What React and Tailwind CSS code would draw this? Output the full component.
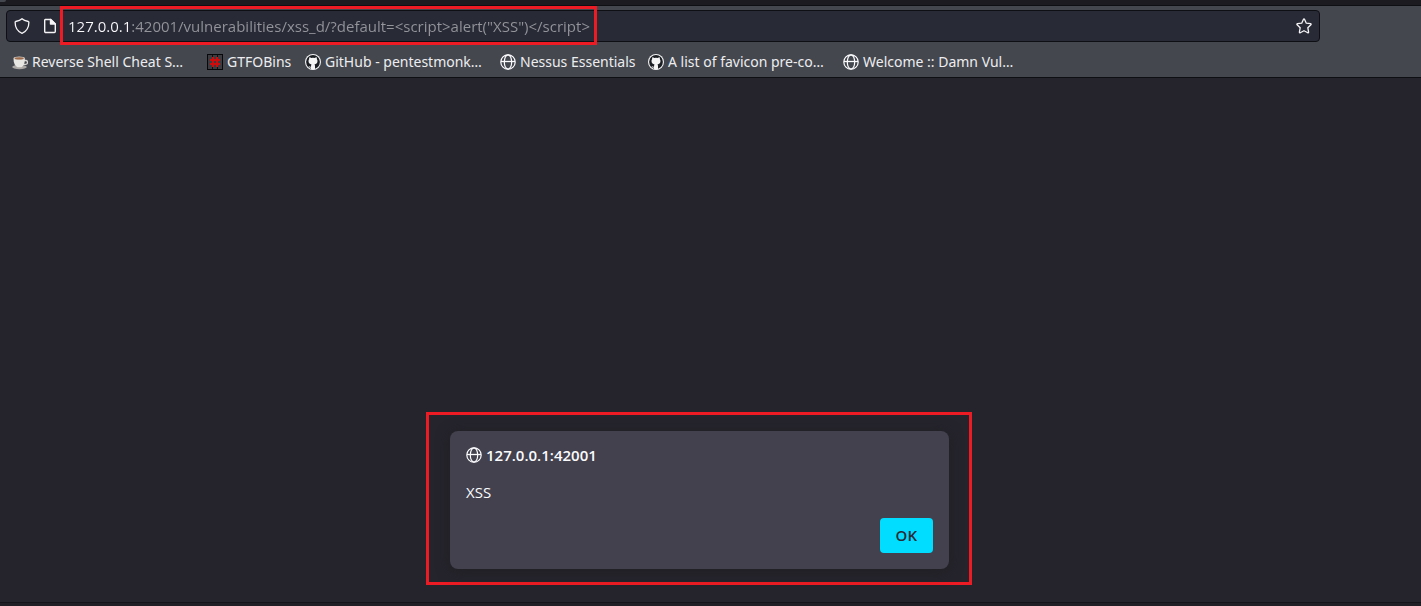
import React from "react";

function Globe() {
  return (
    <svg className="size-4 shrink-0" viewBox="0 0 16 16" fill="none" stroke="#fbfbfe" strokeWidth="1.2" aria-hidden="true">
      <circle cx="8" cy="8" r="7.2" />
      <ellipse cx="8" cy="8" rx="3.7" ry="7.2" />
      <path d="M1 7.5h14" strokeWidth="1.3" />
    </svg>
  );
}

function Cup() {
  return (
    <svg className="size-4 shrink-0" viewBox="0 0 16 16" aria-hidden="true">
      <ellipse cx="7.5" cy="13" rx="7.3" ry="2.2" fill="#aaa7a4" />
      <path d="M12 6.5h1.600a1.500 1.500 0 0 1 0 3.800H11" fill="none" stroke="#d8d6d3" strokeWidth="1.3" />
      <path d="M1.500 4.500h11.400c0 4.600-1.200 7.600-3.400 8.800h-4C3 12.100 1.500 9.100 1.500 4.500z" fill="#e8e6e3" />
      <ellipse cx="7.200" cy="4.300" rx="5.700" ry="1.700" fill="#d5d0cb" />
      <ellipse cx="7.200" cy="4.400" rx="4.500" ry="1.100" fill="#9b6b4b" />
    </svg>
  );
}

function Hash() {
  return (
    <svg className="size-4 shrink-0" viewBox="0 0 16 16" aria-hidden="true">
      <rect width="16" height="16" fill="#08080a" />
      <path d="M1 1h14v14H1z" fill="#3b3b40" />
      <path d="M5.500 1v14M10.500 1v14" stroke="#101013" strokeWidth="1" />
      <path d="M6 3v10M10 3v10M3 6h10M3 10h10" stroke="#cf0c0c" strokeWidth="2" />
    </svg>
  );
}

function Octocat() {
  return (
    <svg className="size-4 shrink-0" viewBox="0 0 16 16" aria-hidden="true">
      <circle cx="8" cy="8" r="8" fill="#f4f4f5" />
      <circle cx="8" cy="8" r="6.900" fill="#1b1f23" />
      <path
        d="M4.300 3.200c.8 0 1.500.4 2.100.8a7 7 0 0 1 3.200 0c.6-.4 1.300-.8 2.100-.8.3.8.2 1.400.1 1.800.5.600.7 1.300.7 2.100 0 2.500-1.500 3.100-3 3.300.4.400.5.900.5 1.500v3.300H6v-1.600c-1.500.3-2-.6-2.500-1.400.9-.2 1.400.9 2.500.6 0-1 .1-1.900.5-2.400-1.500-.2-3-.8-3-3.300 0-.8.2-1.500.7-2.100-.1-.4-.2-1 .1-1.800z"
        fill="#f4f4f5"
      />
    </svg>
  );
}

const bookmarks = [
  { label: "Reverse Shell Cheat S…", icon: Cup, width: "w-[183px]" },
  { label: "GTFOBins", icon: Hash, width: "w-[86px]" },
  { label: "GitHub - pentestmonk…", icon: Octocat, width: "w-[183px]" },
  { label: "Nessus Essentials", icon: Globe, width: "w-[136px]" },
  { label: "A list of favicon pre-co…", icon: Octocat, width: "w-[183px]" },
  { label: "Welcome :: Damn Vul…", icon: Globe, width: "w-[183px]" },
];

function AddressBar() {
  return (
    <div className="mr-[101px] ml-1.5 flex h-8 items-center rounded-sm border border-[#0e0f15] bg-[#282a36]">
      <button type="button" aria-label="Tracking protection" className="ml-[7px]">
        <svg className="size-4" viewBox="0 0 16 16" fill="none" stroke="#f4f4f6" strokeWidth="1.300" strokeLinejoin="round" aria-hidden="true">
          <path d="M8 .8c1.500 1.400 4 2.200 6.400 2.700.3.100.5.300.5.600 0 5.400-2.200 9.400-6.900 11.200C3.300 13.500 1.100 9.500 1.100 4.100c0-.3.200-.5.500-.6C4 3 6.500 2.200 8 .8z" />
        </svg>
      </button>
      <button type="button" aria-label="Site information" className="ml-3">
        <svg className="size-4" viewBox="0 0 16 16" fill="none" stroke="#f4f4f6" strokeWidth="1.400" strokeLinejoin="round" aria-hidden="true">
          <path d="M3.200 1.500h5.600l4.500 4.500v7.500a1 1 0 0 1-1 1H3.700a1 1 0 0 1-1-1V2a.5.5 0 0 1 .5-.5z" />
          <path d="M8.500 1.500V6h4.800z" fill="#f4f4f6" />
        </svg>
      </button>
      <div className="relative ml-2.5 w-[524px]">
        <input
          type="text"
          aria-label="Address"
          defaultValue={'127.0.0.1:42001/vulnerabilities/xss_d/?default=<script>alert("XSS")</script>'}
          className="block h-[30px] w-full bg-[linear-gradient(90deg,#fbfbfe_62px,#94959b_62px)] bg-clip-text text-[#94959b] outline-none [-webkit-text-fill-color:transparent]"
        />
        <div className="pointer-events-none absolute -top-[5px] -right-[5px] -bottom-1 -left-2 border-3 border-[#ed1c24]" />
      </div>
      <button type="button" aria-label="Bookmark this page" className="mr-[7px] ml-auto">
        <svg className="size-4" viewBox="0 0 16 16" fill="none" stroke="#f4f4f6" strokeWidth="1.300" strokeLinejoin="round" aria-hidden="true">
          <path d="M7.500 1.200a.55.55 0 0 1 1 0l1.800 4 4.300.5c.5.100.7.600.3 1l-3.100 3 .8 4.500c.1.500-.4.800-.8.600L8 12.700l-3.800 2.100c-.4.200-.9-.1-.8-.6l.8-4.500-3.100-3c-.4-.4-.2-.9.3-1l4.300-.5z" />
        </svg>
      </button>
    </div>
  );
}

export default function App() {
  return (
    <div className="flex min-h-screen flex-col bg-[#25242d] font-['Open_Sans','Noto_Sans',sans-serif] text-[15px] leading-5 text-[#fbfbfe]">
      <div className="h-1.5 border-b border-[#0e0f13] bg-[#1c1b20]">
        <div className="h-0.5 w-1.5 rounded-br-sm bg-[#44474e]" />
      </div>
      <header className="border-b border-[#0e0f13] bg-[#44474e] pt-1">
        <AddressBar />
        <nav aria-label="Bookmarks" className="flex h-[35px] items-center gap-3 px-3 pt-1 font-['Noto_Sans',sans-serif] text-sm whitespace-nowrap text-[#ededf0]">
          {bookmarks.map(({ label, icon: Icon, width }) => (
            <a key={label} href="#" className={`flex items-center gap-1 ${width}`}>
              <Icon />
              {label}
            </a>
          ))}
        </nav>
      </header>
      <main className="flex flex-1 items-end justify-center pr-[23px] pb-[17px]">
        <div className="w-[546px] border-3 border-[#ed1c24] pt-4 pr-5 pb-[13px] pl-[21px]">
          <section role="alertdialog" aria-labelledby="origin" aria-describedby="message" className="rounded-lg bg-[#42414d] px-4 pt-3.5 pb-4 shadow-[0_2px_14px_rgba(30,30,30,0.8)]">
            <h1 id="origin" className="flex items-center gap-1 font-semibold">
              <Globe />
              127.0.0.1:42001
            </h1>
            <p id="message" className="mt-[17px]">XSS</p>
            <div className="mt-4 flex justify-end">
              <button type="button" className="h-[35px] rounded-sm bg-[#00ddff] px-4 pb-0.5 font-semibold text-[#2b2a33]">
                OK
              </button>
            </div>
          </section>
        </div>
      </main>
      <div className="h-1 border-t border-[#15141a] bg-[#201f26]" />
    </div>
  );
}
